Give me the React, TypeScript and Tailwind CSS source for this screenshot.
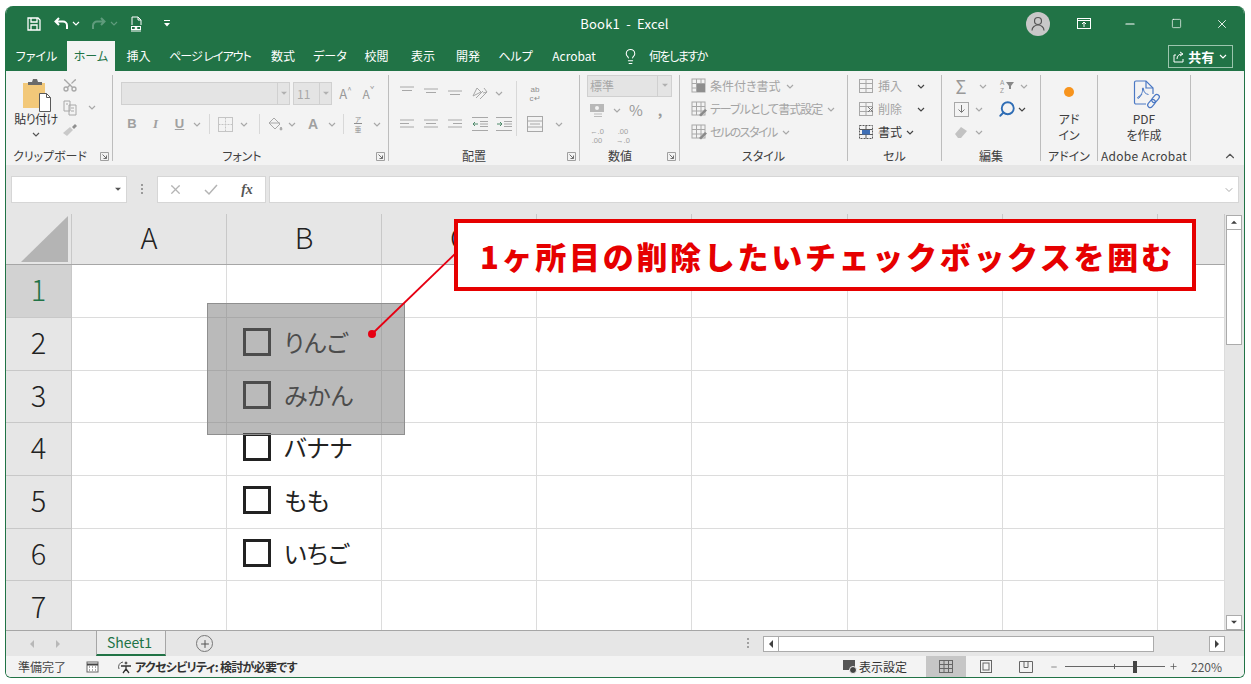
import type { ReactNode } from 'react';
import { ChevronDown, ChevronUp, Lightbulb, Minus, Plus, Scissors, Search, Square, X } from 'lucide-react';

const GRAY = '#a8a8a8';
const ICON_TEXT = "overflow-visible font-['Liberation_Sans',sans-serif]";

function Chev({ color = GRAY, className = '' }: { color?: string; className?: string }) {
  return (
    <svg width="8" height="5" viewBox="0 0 8 5" className={className}>
      <path d="M1 1l3 3 3-3" fill="none" stroke={color} strokeWidth="1.2" />
    </svg>
  );
}

function Caret({ dir = 'down', color = '#404040' }: { dir?: 'down' | 'up' | 'left' | 'right'; color?: string }) {
  const pts = { down: '0,1 8,1 4,5', up: '0,5 8,5 4,1', left: '6,0 6,8 2,4', right: '2,0 2,8 6,4' }[dir];
  return (
    <svg width="8" height="8" viewBox="0 0 8 8" className={dir === 'down' || dir === 'up' ? 'h-[6px]' : ''}>
      <polygon points={pts} fill={color} />
    </svg>
  );
}

function Slot({ c, children }: { c: string; children?: ReactNode }) {
  return <div className={`flex shrink-0 items-center justify-center whitespace-nowrap ${c}`}>{children}</div>;
}

function Launcher() {
  return (
    <svg width="9" height="9" viewBox="0 0 9 9">
      <path d="M.5 8.5V.5h8v8z" fill="none" stroke="#a0a0a0" />
      <path d="M2.5 2.5l4 4M6.5 3.5v3h-3" fill="none" stroke="#707070" />
    </svg>
  );
}

function Group({
  c,
  pad = '',
  l = '',
  label,
  launcher,
  children,
}: {
  c: string;
  pad?: string;
  l?: string;
  label: string;
  launcher?: boolean;
  children: ReactNode;
}) {
  return (
    <div className={`my-[4px] h-[86px] shrink-0 border-r border-[#bdbdbd] ${c}`}>
      <div className={`flow-root h-[72px] ${pad}`}>{children}</div>
      <div className={`relative flex h-[17px] items-center justify-center text-[12px] text-[#404040] ${l}`}>
        <span className="whitespace-nowrap">{label}</span>
        {launcher && (
          <span className="absolute right-[3px] top-[5px] flex">
            <Launcher />
          </span>
        )}
      </div>
    </div>
  );
}

function Lines({ rows }: { rows: [number, number][] }) {
  return (
    <svg width="16" height="12" viewBox="0 0 16 12">
      {rows.map(([a, b], i) => (
        <path key={i} d={`M${a} ${2 + i * 3.5}H${b}`} stroke={GRAY} />
      ))}
    </svg>
  );
}

function Indent({ flip }: { flip?: boolean }) {
  return (
    <svg width="16" height="14" viewBox="0 0 16 14" fill="none" stroke={GRAY}>
      <path d="M0 .5h16M0 13.5h16M8 4.5h8M8 7h8M8 9.5h8" />
      {flip ? (
        <path d="M1 7h5M4 5l2 2-2 2" stroke="#4f8a6b" />
      ) : (
        <path d="M1 7h5M3 5L1 7l2 2" stroke="#4f8a6b" />
      )}
    </svg>
  );
}

function StyleIcon({ kind }: { kind: number }) {
  return (
    <svg width="16" height="16" viewBox="0 0 16 16">
      <rect x="1" y="1" width="13" height="13" fill="#f3f3f3" stroke={GRAY} />
      <path d="M1 5.5h13M1 10h13M5.5 1v13M10 1v13" stroke={GRAY} />
      {kind === 0 && <rect x="6" y="6" width="8" height="8" fill="#8e8e8e" />}
      {kind > 0 && <path d="M8 14l6-6 2 1.5-6 6z" fill="#8a8a8a" />}
    </svg>
  );
}

function CellIcon({ dark, mark }: { dark?: boolean; mark?: boolean }) {
  const col = dark ? '#5a5a5a' : GRAY;
  return (
    <svg width="16" height="16" viewBox="0 0 16 16">
      <rect x="1.5" y="1.5" width="13" height="13" fill="none" stroke={col} strokeDasharray={dark ? '2 1' : undefined} />
      <path d="M1.5 5.5h13M1.5 10.5h13M8 1.5v13" stroke={col} />
      {dark && <rect x="4" y="6" width="8" height="4.5" fill="#3f6fb5" />}
      {mark && <path d="M10 6l5 5M15 6l-5 5" stroke="#777" />}
    </svg>
  );
}

function PasteIcon() {
  return (
    <svg width="30" height="34" viewBox="0 0 30 34">
      <rect x="1" y="5" width="22" height="25" fill="#f2c879" />
      <path d="M6 4h4l1-3h4l1 3h4v3H6z" fill="#6b6b6b" />
      <path d="M17.5 15.5h7l4 4v14h-11z" fill="#fff" stroke="#5a5a5a" />
      <path d="M24.5 15.5v4h4" fill="none" stroke="#5a5a5a" />
    </svg>
  );
}

function PdfIcon() {
  return (
    <svg width="30" height="32" viewBox="0 0 30 32" fill="none" stroke="#4a78c4" strokeWidth="1.2">
      <path d="M14 25H4a1.5 1.5 0 0 1-1.5-1.5v-20A1.5 1.5 0 0 1 4 2h10l7 7v6" />
      <path d="M14 2v7h7" />
      <path d="M6 18c3-1 5-5 4.5-8-.3-1.5 1-1.5 1 0 0 3 2 5 5 5.5M6 18c-1 1 0 2 1 1l3-4" strokeWidth="1" />
      <rect x="15" y="22" width="9" height="5" rx="2.5" transform="rotate(-50 19.5 24.5)" />
      <rect x="19" y="17" width="9" height="5" rx="2.5" transform="rotate(-50 23.5 19.5)" />
    </svg>
  );
}

function Ribbon() {
  return (
    <div className="flex h-[94px] bg-[#f3f3f3]">
      <Group c="w-[107px]" l="pr-[18px]" label="クリップボード" launcher>
        <div className="flex">
          <div className="ml-[8px] flex w-[44px] flex-col items-center">
            <div className="ml-[2px] mt-[3px]"><PasteIcon /></div>
            <div className="-mt-[1px] whitespace-nowrap text-[12px] leading-[16px] tracking-[-0.5px] text-[#333]">貼り付け</div>
            <Chev color="#555" className="mt-[5px]" />
          </div>
          <div className="ml-[3px] flex w-[18px] flex-col items-center gap-[7px] pt-[2px]">
            <Scissors size={16} color={GRAY} className="-rotate-90" />
            <svg width="14" height="16" viewBox="0 0 14 16" fill="none" stroke={GRAY}><path d="M1 1h6v10H1zM6 5h7v10H6z" fill="#f3f3f3" /><path d="M3 4h2M8 8h3M8 11h3" /></svg>
            <svg width="16" height="14" viewBox="0 0 16 14"><path d="M1 10l7-6 3 3-6 6z" fill="#c9c9c9" /><path d="M10 4l3-3 2 2-3 3z" fill="#8f8f8f" /></svg>
          </div>
          <div className="ml-[9px] mt-[30px]"><Chev /></div>
        </div>
      </Group>

      <Group c="w-[276px]" pad="pl-[8px]" l="pr-[17px]" label="フォント" launcher>
        <div className="mt-[7px] flex h-[23px]">
          <div className="flex h-[23px] w-[169px] items-center justify-end border border-[#d0d0d0] bg-[#e4e4e4]">
            <Slot c="h-full w-[12px] border-l border-[#d0d0d0]"><Caret color="#b0b0b0" /></Slot>
          </div>
          <div className="ml-[3px] flex h-[23px] w-[39px] items-center border border-[#d0d0d0] bg-[#e4e4e4] pl-[3px] text-[12px] text-[#a8a8a8]">
            <span className="flex-1">11</span>
            <Slot c="h-full w-[12px] border-l border-[#d0d0d0]"><Caret color="#b0b0b0" /></Slot>
          </div>
          <Slot c="ml-[2px] w-[23px] text-[13px] text-[#999]">A<sup className="text-[8px]">^</sup></Slot>
          <Slot c="w-[23px] text-[12px] text-[#999]">A<sup className="text-[8px]">ˇ</sup></Slot>
        </div>
        <div className="mt-[9px] flex h-[20px] items-center text-[#a0a0a0]">
          <Slot c="w-[22px] text-[13px] font-bold font-['Liberation_Sans',sans-serif]">B</Slot>
          <Slot c="w-[25px] text-[13px] italic font-bold font-['Liberation_Serif',serif]">I</Slot>
          <Slot c="w-[23px] text-[13px] font-bold underline font-['Liberation_Sans',sans-serif]">U</Slot>
          <Slot c="w-[12px]"><Chev /></Slot>
          <Slot c="h-[20px] w-[13px]"><div className="h-full w-px bg-[#d8d8d8]" /></Slot>
          <Slot c="w-[19px]">
            <svg width="15" height="15" viewBox="0 0 15 15" fill="none" stroke="#c4c4c4"><rect x=".5" y=".5" width="14" height="14" /><path d="M.5 7.5h14M7.5 .5v14" strokeDasharray="2 1" /></svg>
          </Slot>
          <Slot c="w-[18px]"><Chev /></Slot>
          <Slot c="h-[20px] w-[13px]"><div className="h-full w-px bg-[#d8d8d8]" /></Slot>
          <Slot c="w-[17px]">
            <svg width="16" height="15" viewBox="0 0 16 15" fill="none" stroke={GRAY}><path d="M7 1l6 6-5 5-6-6z" /><path d="M2 6h11" /><path d="M14 10l1 2a1 1 0 0 1-2 0z" fill={GRAY} /></svg>
          </Slot>
          <Slot c="w-[18px]"><Chev /></Slot>
          <Slot c="w-[24px] text-[14px] font-bold font-['Liberation_Sans',sans-serif]">A</Slot>
          <Slot c="w-[13px]"><Chev /></Slot>
          <Slot c="h-[20px] w-[10px]"><div className="h-full w-px bg-[#d8d8d8]" /></Slot>
          <Slot c="w-[19px]">
            <svg width="10" height="18" viewBox="0 0 10 18" fill="#8f8f8f" fontSize="6.5" textAnchor="middle" className="overflow-visible"><text x="5" y="6.500">ア</text><path d="M1 8.500h8" stroke="#8f8f8f" /><text x="5" y="16.500">亜</text></svg>
          </Slot>
          <Slot c="w-[20px]"><Chev /></Slot>
        </div>
      </Group>

      <Group c="w-[191px]" pad="pl-[6px]" l="pr-[20px]" label="配置" launcher>
        <div className="mt-[8px] flex h-[20px] items-center">
          <Slot c="w-[24px]"><div className="-mt-[4px]"><Lines rows={[[1, 15], [3, 13]]} /></div></Slot>
          <Slot c="w-[24px]"><Lines rows={[[1, 15], [3, 13]]} /></Slot>
          <Slot c="w-[24px]"><div className="mt-[4px]"><Lines rows={[[1, 15], [3, 13]]} /></div></Slot>
          <Slot c="w-[26px]">
            <svg width="18" height="16" viewBox="0 0 18 16" fill="none" stroke={GRAY}><path d="M2 11l4-8 4 4-8 4M5 13l7-7M9 14l7-7M13 3l3 4-4 1" /></svg>
          </Slot>
          <Slot c="w-[12px]"><Chev /></Slot>
          <Slot c="h-[20px] w-[23px]"><div className="mt-[31px] h-[55px] w-px shrink-0 bg-[#d8d8d8]" /></Slot>
          <Slot c="w-[14px]">
            <svg width="14" height="18" viewBox="0 0 14 18" fill="#8f8f8f" fontSize="8" textAnchor="middle" className={ICON_TEXT}><text x="7" y="7.500">ab</text><text x="7" y="17">c↵</text></svg>
          </Slot>
        </div>
        <div className="mt-[11px] flex h-[20px] items-center">
          <Slot c="w-[24px]"><Lines rows={[[1, 15], [1, 10], [1, 15]]} /></Slot>
          <Slot c="w-[24px]"><Lines rows={[[1, 15], [3, 13], [1, 15]]} /></Slot>
          <Slot c="w-[24px]"><Lines rows={[[1, 15], [6, 15], [1, 15]]} /></Slot>
          <Slot c="w-[25px]"><Indent /></Slot>
          <Slot c="w-[24px]"><Indent flip /></Slot>
          <Slot c="w-[3px]" />
          <Slot c="w-[32px]">
            <svg width="16" height="16" viewBox="0 0 16 16" fill="none" stroke={GRAY}><rect x=".5" y=".5" width="15" height="15" /><path d="M.5 5h15M.5 11h15M3 8h10" /></svg>
          </Slot>
          <Slot c="w-[16px]"><Chev /></Slot>
        </div>
      </Group>

      <Group c="w-[100px]" pad="pl-[7px]" l="pr-[19px]" label="数値" launcher>
        <div className="flex h-[22px] w-[85px] items-center border border-[#d0d0d0] bg-[#e4e4e4] pl-[2px] text-[12px] text-[#a8a8a8]">
          <span className="flex-1">標準</span>
          <Slot c="h-full w-[14px] border-l border-[#d0d0d0]"><Caret color="#b0b0b0" /></Slot>
        </div>
        <div className="mt-[3px] flex h-[20px] items-center text-[#999]">
          <Slot c="w-[20px]">
            <svg width="16" height="15" viewBox="0 0 16 15"><rect x="1" y="1" width="14" height="8" fill="#b8b8b8" /><circle cx="8" cy="5" r="2" fill="#f3f3f3" /><path d="M5 11h8M5 13.5h8" stroke="#bbb" /></svg>
          </Slot>
          <Slot c="w-[20px]"><Chev /></Slot>
          <Slot c="w-[18px] text-[15px]">%</Slot>
          <Slot c="w-[30px] text-[14px] font-bold">,</Slot>
        </div>
        <div className="mt-[3px] flex h-[24px] items-center text-[#a0a0a0]">
          <Slot c="w-[20px]">
            <svg width="18" height="19" viewBox="0 0 18 19" fill="#a0a0a0" fontSize="7.5" textAnchor="middle" className={ICON_TEXT}><text x="9" y="7.500">←.0</text><text x="9" y="17">.00</text></svg>
          </Slot>
          <Slot c="ml-[6px] w-[20px]">
            <svg width="18" height="19" viewBox="0 0 18 19" fill="#a0a0a0" fontSize="7.5" textAnchor="middle" className={ICON_TEXT}><text x="9" y="7.500">.00</text><text x="9" y="17">→.0</text></svg>
          </Slot>
        </div>
      </Group>

      <Group c="w-[168px]" pad="pl-[11px] pt-px" label="スタイル">
        {[
          { t: '条件付き書式', k: '' },
          { t: 'テーブルとして書式設定', k: 'tracking-[-1px]' },
          { t: 'セルのスタイル', k: 'tracking-[-1.5px]' },
        ].map((r, i) => (
          <div key={r.t} className="mb-[3px] flex h-[20px] items-center gap-[3px] whitespace-nowrap text-[12px] text-[#a4a4a4]">
            <StyleIcon kind={i} />
            <span className={r.k}>{r.t}</span>
            <Chev className="ml-[2px]" />
          </div>
        ))}
      </Group>

      <Group c="w-[94px]" pad="pl-[10px] pt-px" label="セル">
        {[
          { t: '挿入', gap: 'ml-[11px]', cls: 'text-[#a4a4a4]', icon: <CellIcon /> },
          { t: '削除', gap: 'ml-[11px]', cls: 'text-[#a4a4a4]', icon: <CellIcon mark /> },
          { t: '書式', gap: 'ml-0', cls: 'text-[#333]', icon: <CellIcon dark /> },
        ].map((r) => (
          <div key={r.t} className={`mb-[3px] flex h-[20px] items-center gap-[4px] text-[12px] ${r.cls}`}>
            {r.icon}
            <span>{r.t}</span>
            <Chev color="#444" className={r.gap} />
          </div>
        ))}
      </Group>

      <Group c="w-[99px]" pad="pl-[11px] pt-px" label="編集">
        <div className="flex h-[20px] items-center text-[#999]">
          <Slot c="w-[16px] text-[18px] leading-none">Σ</Slot>
          <Slot c="ml-[10px] w-[8px]"><Chev /></Slot>
          <Slot c="ml-[9px] w-[24px]">
            <svg width="18" height="16" viewBox="0 0 18 16" fill="#999" fontSize="6.5" className={ICON_TEXT}><text x="1" y="6.500">A</text><text x="1" y="14.500">Z</text><polygon points="7,4 15,4 12,8 12,11 10,11 10,8" fill="#888" /></svg>
          </Slot>
          <Slot c="w-[8px]"><Chev /></Slot>
        </div>
        <div className="mt-[3px] flex h-[20px] items-center">
          <Slot c="w-[16px]">
            <svg width="15" height="15" viewBox="0 0 15 15" fill="none" stroke={GRAY}><rect x=".5" y=".5" width="14" height="14" /><path d="M7.5 3v7M4.5 7.5l3 3 3-3" stroke="#777" /></svg>
          </Slot>
          <Slot c="ml-[6px] w-[8px]"><Chev /></Slot>
          <Slot c="ml-[14px] w-[20px]"><Search size={18} color="#2f6db5" strokeWidth={2.5} className="-scale-x-100" /></Slot>
          <Slot c="ml-[1px] w-[8px]"><Chev color="#444" /></Slot>
        </div>
        <div className="mt-[3px] flex h-[20px] items-center">
          <Slot c="w-[16px]">
            <svg width="14" height="12" viewBox="0 0 14 12"><path d="M1 8l6-7 6 4-6 7H4z" fill="#c2c2c2" /></svg>
          </Slot>
          <Slot c="ml-[6px] w-[8px]"><Chev /></Slot>
        </div>
      </Group>

      <Group c="w-[57px]" label="アドイン">
        <div className="flex flex-col items-center">
          <div className="mt-[12px] h-[10px] w-[10px] rounded-full bg-[#f7941d]" />
          <div className="mt-[14px] text-center text-[12px] leading-[16px] text-[#404040]">アド<br />イン</div>
        </div>
      </Group>

      <Group c="w-[93px]" l="tracking-[0.3px]" label="Adobe Acrobat">
        <div className="flex flex-col items-center">
          <div className="ml-[6px] mt-[4px] h-[32px]"><PdfIcon /></div>
          <div className="text-center text-[12px] leading-[16px] text-[#404040]">PDF<br />を作成</div>
        </div>
      </Group>

      <div className="flex flex-1 items-end justify-end pb-[2px] pr-[7px]">
        <ChevronUp size={14} color="#555" />
      </div>
    </div>
  );
}

function FormulaBar() {
  return (
    <div className="flex h-[49px] items-start bg-[#e6e6e6] px-[5px] pt-[11px]">
      <div className="flex h-[27px] w-[116px] items-center justify-end border border-[#d6d6d6] bg-white pr-[4px]">
        <Caret color="#555" />
      </div>
      <Slot c="h-[27px] w-[30px]">
        <svg width="3" height="11" viewBox="0 0 3 11" fill="#9a9a9a"><rect y="0" width="2" height="2" /><rect y="4" width="2" height="2" /><rect y="8" width="2" height="2" /></svg>
      </Slot>
      <div className="flex h-[27px] w-[109px] items-center border border-[#d6d6d6] bg-white">
        <Slot c="w-[35px]"><X size={15} color="#b4b4b4" /></Slot>
        <Slot c="w-[36px]">
          <svg width="14" height="12" viewBox="0 0 14 12" fill="none" stroke="#b4b4b4" strokeWidth="1.5"><path d="M1 6l4 4 8-9" /></svg>
        </Slot>
        <Slot c="w-[36px] font-['Liberation_Serif',serif] text-[14px] font-bold italic text-[#555]">fx</Slot>
      </div>
      <div className="ml-[3px] flex h-[27px] flex-1 items-center justify-end border border-[#d6d6d6] bg-white pr-[3px]">
        <ChevronDown size={12} color="#aaa" />
      </div>
    </div>
  );
}

// D to H sit under the callout, so their letters never show
const COLS = [
  { n: 'A', w: 'w-[155px]' },
  { n: 'B', w: 'w-[155px]' },
  { n: 'C', w: 'w-[155px]' },
  { n: '', w: 'w-[155px]' },
  { n: '', w: 'w-[156px]' },
  { n: '', w: 'w-[155px]' },
  { n: '', w: 'w-[155px]' },
  { n: '', w: 'w-[67px]' },
];

const ROWS = [
  { n: 1, h: 'h-[53px]', item: '' },
  { n: 2, h: 'h-[53px]', item: 'りんご' },
  { n: 3, h: 'h-[52px]', item: 'みかん' },
  { n: 4, h: 'h-[53px]', item: 'バナナ' },
  { n: 5, h: 'h-[53px]', item: 'もも' },
  { n: 6, h: 'h-[52px]', item: 'いちご' },
  { n: 7, h: 'h-[49px]', item: '' },
];

function Sheet() {
  return (
    <div className="flex h-[416px]">
      <div className="w-[1219px] shrink-0 overflow-hidden">
        <div className="flex h-[51px] border-b border-[#a6a6a6] bg-[#e6e6e6]">
          <div className="flex w-[66px] shrink-0 items-end justify-end border-r border-[#c8c8c8] pb-[2px] pr-[3px]">
            <svg width="47" height="46" viewBox="0 0 47 46"><polygon points="47,0 47,46 0,46" fill="#b4b4b4" /></svg>
          </div>
          {COLS.map((c, i) => (
            <div key={i} className={`flex shrink-0 items-center justify-center overflow-hidden border-r border-[#c8c8c8] pb-[5px] text-[29px] font-light leading-none text-[#222] ${c.w}`}>
              {c.n}
            </div>
          ))}
        </div>
        {ROWS.map((r) => (
          <div key={r.n} className={`flex ${r.h}`}>
            <div className={`flex w-[66px] shrink-0 items-center justify-center border-r border-[#c8c8c8] text-[29px] font-light leading-none ${r.n === 7 ? '' : 'border-b pb-[5px]'} ${r.n === 1 ? 'bg-[#d2d2d2] text-[#217346]' : 'bg-[#e6e6e6] text-[#222]'}`}>
              {r.n}
            </div>
            {COLS.map((c, i) => (
              <div key={i} className={`flex shrink-0 items-center border-b border-r border-[#dcdcdc] bg-white ${r.n === 7 ? 'border-b-0' : ''} ${c.w}`}>
                {c.n === 'B' && r.item && (
                  <div className="flex items-center pb-[4px] pl-[16px]">
                    <div className="h-[28px] w-[28px] border-[3px] border-[#222]" />
                    <span className="ml-[13px] whitespace-nowrap text-[24px] leading-none text-[#222]">{r.item}</span>
                  </div>
                )}
              </div>
            ))}
          </div>
        ))}
      </div>
      <div className="flex w-[19px] flex-col items-center bg-[#e6e6e6] pr-[2px] pt-[1px]">
        <Slot c="h-[15px] w-[16px] border border-[#ababab] bg-white"><Caret dir="up" /></Slot>
        <div className="h-[115px] w-[16px] border border-t-0 border-[#ababab] bg-white" />
        <div className="flex-1" />
        <Slot c="h-[15px] w-[16px] border border-[#ababab] bg-white"><Caret /></Slot>
      </div>
    </div>
  );
}

function TabBar() {
  return (
    <div className="flex h-[26px] items-center border-t border-[#a6a6a6] bg-[#e6e6e6]">
      <Slot c="ml-[22px] w-[8px]"><Caret dir="left" color="#b8b8b8" /></Slot>
      <Slot c="ml-[18px] w-[8px]"><Caret dir="right" color="#b8b8b8" /></Slot>
      <div className="ml-[34px] flex h-[25px] w-[70px] items-center justify-center border-x border-b-2 border-x-[#a6a6a6] border-b-[#217346] bg-[#ececec] pr-[3px] text-[14px] text-[#217346]">
        Sheet1
      </div>
      <div className="ml-[30px] flex h-[17px] w-[17px] items-center justify-center rounded-full border border-[#777]">
        <Plus size={12} color="#555" />
      </div>
      <Slot c="ml-[533px] w-[4px]">
        <svg width="3" height="11" viewBox="0 0 3 11" fill="#a0a0a0"><rect width="2" height="2" /><rect y="4" width="2" height="2" /><rect y="8" width="2" height="2" /></svg>
      </Slot>
      <Slot c="ml-[13px] h-[16px] w-[16px] border border-[#ababab] bg-white"><Caret dir="left" /></Slot>
      <div className="h-[16px] w-[375px] border-y border-r border-[#ababab] bg-white" />
      <div className="w-[55px]" />
      <Slot c="h-[16px] w-[16px] border border-[#ababab] bg-white"><Caret dir="right" /></Slot>
    </div>
  );
}

function StatusBar() {
  return (
    <div className="flex h-[21px] items-center bg-[#f3f3f3] text-[12px] text-[#444]">
      <span className="ml-[12px] w-[47px] whitespace-nowrap">準備完了</span>
      <Slot c="ml-[21px] w-[13px]">
        <svg width="13" height="13" viewBox="0 0 13 13"><rect x="1" y="2" width="11" height="10" fill="#fff" stroke="#666" /><path d="M1 4.5h11" stroke="#444" strokeWidth="2" /><path d="M3 7h1M6 7h1M9 7h1M3 10h1M6 10h1M9 10h1" stroke="#555" /></svg>
      </Slot>
      <Slot c="ml-[17px] w-[16px]">
        <svg width="16" height="14" viewBox="0 0 16 14" fill="none" stroke="#555"><path d="M7 2a5 5 0 0 0-4 7" /><circle cx="10" cy="3" r="1" fill="#333" /><path d="M5 6h10M10 6v3l-3 4M10 9l3 4" strokeWidth="1.3" stroke="#333" /></svg>
      </Slot>
      <span className="ml-[3px] whitespace-nowrap font-bold tracking-[-0.7px] text-[#333]">アクセシビリティ: 検討が必要です</span>
      <div className="flex-1" />
      <svg width="16" height="15" viewBox="0 0 16 15"><rect x="1" y="1" width="12" height="10" fill="#555" /><circle cx="11" cy="11" r="3.5" fill="#444" stroke="#f3f3f3" /></svg>
      <span className="ml-[1px] whitespace-nowrap text-[12px] text-[#333]">表示設定</span>
      <Slot c="ml-[19px] h-[21px] w-[40px] bg-[#c6c6c6]">
        <svg width="14" height="13" viewBox="0 0 14 13" fill="none" stroke="#666"><rect x=".5" y=".5" width="13" height="12" /><path d="M.5 4.5h13M.5 8.5h13M5 .5v12M9.5 .5v12" /></svg>
      </Slot>
      <Slot c="h-[21px] w-[40px]">
        <svg width="12" height="13" viewBox="0 0 12 13" fill="none" stroke="#666"><rect x=".5" y=".5" width="11" height="12" /><rect x="3" y="3" width="6" height="7" /></svg>
      </Slot>
      <Slot c="h-[21px] w-[39px]">
        <svg width="14" height="12" viewBox="0 0 14 12" fill="none" stroke="#666"><path d="M.5 .5h13v11H.5zM5 .5v6h4v-6" /></svg>
      </Slot>
      <Slot c="ml-[5px] w-[8px]"><Minus size={8} color="#555" /></Slot>
      <div className="relative ml-[7px] flex h-[13px] w-[100px] items-center">
        <div className="h-px w-full bg-[#666]" />
        <div className="absolute left-[49px] h-[5px] w-px bg-[#666]" />
        <div className="absolute left-[68px] h-[12px] w-[4px] bg-[#444]" />
      </div>
      <Slot c="ml-[4px] w-[9px]"><Plus size={9} color="#555" /></Slot>
      <span className="ml-[13px] mr-[19px] w-[34px] whitespace-nowrap text-[12px] text-[#555]">220%</span>
    </div>
  );
}

const TABS = [
  { t: 'ファイル', w: 'w-[61px]' },
  { t: 'ホーム', w: 'w-[48px]', active: true },
  { t: '挿入', w: 'w-[47px]' },
  { t: 'ページ レイアウト', w: 'w-[96px] tracking-[-1px]' },
  { t: '数式', w: 'w-[50px]' },
  { t: 'データ', w: 'w-[44px]' },
  { t: '校閲', w: 'w-[49px]' },
  { t: '表示', w: 'w-[44px]' },
  { t: '開発', w: 'w-[46px]' },
  { t: 'ヘルプ', w: 'w-[49px]' },
  { t: 'Acrobat', w: 'w-[68px]' },
];

export default function App() {
  return (
    <div className="relative h-[684px] w-[1251px] overflow-hidden bg-white font-['Noto_Sans_CJK_JP','Noto_Sans',sans-serif] [font-feature-settings:'palt']">
      <div className="absolute left-[5px] top-[6px] flex h-[672px] w-[1240px] flex-col overflow-hidden rounded-b-[6px] rounded-t-[8px] border-x border-b border-[#217346]">
        {/* Title bar */}
        <div className="flex h-[35px] shrink-0 items-center bg-[#217346] text-white">
          <Slot c="ml-[20px] w-[16px]">
            <svg width="14" height="14" viewBox="0 0 14 14" fill="none" stroke="#fff" strokeWidth="1.3"><path d="M1 1h10l2 2v10H1z" /><path d="M4 1v4h6V1M4 13V8h6v5" /></svg>
          </Slot>
          <Slot c="ml-[11px] w-[16px]">
            <svg width="15" height="13" viewBox="0 0 15 13" fill="none" stroke="#fff" strokeWidth="2"><path d="M5 1L1.5 4.5 5 8M2 4.5h7a4 4 0 0 1 4 4V12" /></svg>
          </Slot>
          <Slot c="ml-[3px] w-[8px]"><Chev color="#fff" /></Slot>
          <Slot c="ml-[10px] w-[16px]">
            <svg width="15" height="13" viewBox="0 0 15 13" fill="none" stroke="#5f9b7c" strokeWidth="2"><path d="M10 1l3.5 3.5L10 8M13 4.5H6a4 4 0 0 0-4 4V12" /></svg>
          </Slot>
          <Slot c="ml-[4px] w-[8px]"><Chev color="#5f9b7c" /></Slot>
          <Slot c="ml-[11px] w-[14px]">
            <svg width="14" height="16" viewBox="0 0 14 16" fill="none" stroke="#fff"><path d="M3 9V1h6l3 3v5M9 1v3h3M2 15h10" /><rect x="2.5" y="10.5" width="9" height="3" /><circle cx="7" cy="12" r="1" fill="#fff" /></svg>
          </Slot>
          <Slot c="ml-[20px] w-[8px]">
            <svg width="6" height="7" viewBox="0 0 6 7" fill="#fff"><rect width="6" height="1" /><polygon points="0,3 6,3 3,6.5" /></svg>
          </Slot>
          <div className="ml-[409px] w-[90px] whitespace-nowrap text-center text-[13px] tracking-[0.2px]">Book1&nbsp; -&nbsp; Excel</div>
          <div className="ml-[357px] flex h-[24px] w-[24px] shrink-0 items-center justify-center rounded-full bg-[#c8c8c8]">
            <svg width="14" height="15" viewBox="0 0 14 15" fill="none" stroke="#555" strokeWidth="1.2"><circle cx="7" cy="5" r="3.5" /><path d="M1 14.5c0-3.5 3-5.5 6-5.5s6 2 6 5.5" /></svg>
          </div>
          <Slot c="ml-[11px] w-[46px]">
            <svg width="14" height="11" viewBox="0 0 14 11" fill="none" stroke="#fff"><rect x=".5" y=".5" width="13" height="10" /><path d="M.5 2.5h13M7 9V4.5M5 6l2-2 2 2" /></svg>
          </Slot>
          <Slot c="w-[46px]"><Minus size={14} color="#fff" /></Slot>
          <Slot c="w-[46px]"><Square size={11} color="#fff" strokeWidth={1.5} /></Slot>
          <Slot c="w-[45px]"><X size={14} color="#fff" strokeWidth={1.5} /></Slot>
        </div>

        {/* Tabs */}
        <div className="flex h-[30px] shrink-0 items-end bg-[#217346] text-[12px] text-white">
          {TABS.map((tab) => (
            <div
              key={tab.t}
              className={`flex h-[30px] shrink-0 items-center justify-center whitespace-nowrap ${tab.w} ${tab.active ? 'bg-[#f3f3f3] text-[#217346]' : ''}`}
            >
              {tab.t}
            </div>
          ))}
          <Slot c="ml-[12px] h-[30px] w-[20px]"><Lightbulb size={17} color="#fff" strokeWidth={1.5} /></Slot>
          <div className="ml-[9px] flex h-[30px] items-center whitespace-nowrap tracking-[-1.5px]">何をしますか</div>
          <div className="mb-[3px] ml-[461px] flex h-[23px] w-[65px] shrink-0 items-center justify-center gap-[3px] border border-[#9cc5ae] text-[13px] font-bold">
            <svg width="12" height="12" viewBox="0 0 12 12" fill="none" stroke="#fff"><path d="M3 4H1v7h9V8M4 8c0-3 2-5 5-5M7 1l3 2-3 2" /></svg>
            <span>共有</span>
            <Chev color="#fff" className="ml-[2px]" />
          </div>
        </div>

        <Ribbon />
        <FormulaBar />
        <Sheet />
        <TabBar />
        <StatusBar />
      </div>

      {/* Selection rectangle dragged over the checkboxes */}
      <div className="absolute left-[207px] top-[303px] h-[132px] w-[198px] border border-[#8f8f8f] bg-[#767676]/50" />

      {/* Callout */}
      <svg className="absolute left-0 top-0" width="1251" height="684" viewBox="0 0 1251 684">
        <path d="M458 251L372 334" stroke="#e60012" strokeWidth="1.8" />
        <circle cx="372" cy="334" r="4" fill="#e60012" />
      </svg>
      <div className="absolute left-[454px] top-[219px] flex h-[72px] w-[742px] items-center border-[4px] border-[#e60000] bg-white pl-[22px]">
        <span className="whitespace-nowrap text-[31px] font-black leading-none tracking-[2.7px] text-[#e60000] [font-feature-settings:normal]">1ヶ所目の削除したいチェックボックスを囲む</span>
      </div>
    </div>
  );
}
